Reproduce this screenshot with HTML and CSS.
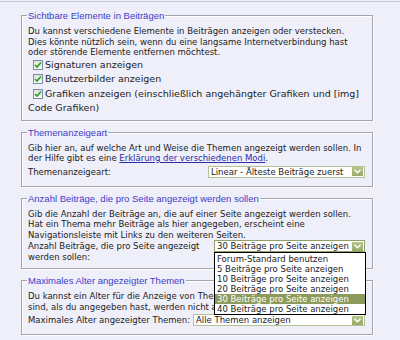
FILE: index.html
```html
<!doctype html>
<html>
<head>
<meta charset="utf-8">
<title>Anzeige-Einstellungen</title>
<link rel="stylesheet" href="styles.css">
</head>
<body>
<div class="page">
<!--Sichtbare Elemente-->
<fieldset class="group">
<legend>Sichtbare Elemente in Beiträgen</legend>
<p>Du kannst verschiedene Elemente in Beiträgen anzeigen oder verstecken. Dies könnte nützlich sein, wenn du eine langsame Internetverbindung hast oder störende Elemente entfernen möchtest.</p>
<ul class="checks">
<li><span class="box"><svg width="8" height="8" viewBox="0 0 8 8"><path d="M1 4 L3 6 L7 1.5" fill="none" stroke="#23a023" stroke-width="1.6"/></svg></span>Signaturen anzeigen</li>
<li><span class="box"><svg width="8" height="8" viewBox="0 0 8 8"><path d="M1 4 L3 6 L7 1.5" fill="none" stroke="#23a023" stroke-width="1.6"/></svg></span>Benutzerbilder anzeigen</li>
<li><span class="box"><svg width="8" height="8" viewBox="0 0 8 8"><path d="M1 4 L3 6 L7 1.5" fill="none" stroke="#23a023" stroke-width="1.6"/></svg></span>Grafiken anzeigen (einschließlich angehängter Grafiken und [img] Code Grafiken)</li>
</ul>
</fieldset>
<!--Themenanzeigeart-->
<fieldset class="group">
<legend>Themenanzeigeart</legend>
<p>Gib hier an, auf welche Art und Weise die Themen angezeigt werden sollen. In der Hilfe gibt es eine <a href="javascript:;">Erklärung der verschiedenen Modi</a>.</p>
<div class="row">
<span class="label">Themenanzeigeart:</span>
<div class="select sel-mode"><span class="value">Linear - Älteste Beiträge zuerst</span><span class="arrow"><svg width="7" height="5" viewBox="0 0 7 5"><path d="M0.5 0.8 L3.5 3.8 L6.5 0.8" fill="none" stroke="#fff" stroke-width="1.4"/></svg></span></div>
</div>
</fieldset>
<!--Beiträge pro Seite-->
<fieldset class="group">
<legend>Anzahl Beiträge, die pro Seite angezeigt werden sollen</legend>
<p>Gib die Anzahl der Beiträge an, die auf einer Seite angezeigt werden sollen. Hat ein Thema mehr Beiträge als hier angegeben, erscheint eine Navigationsleiste mit Links zu den weiteren Seiten.</p>
<div class="row wrap">
<span class="label">Anzahl Beiträge, die pro Seite angezeigt werden sollen:</span>
<div class="select sel-count"><span class="value">30 Beiträge pro Seite anzeigen</span><span class="arrow"><svg width="7" height="5" viewBox="0 0 7 5"><path d="M0.5 0.8 L3.5 3.8 L6.5 0.8" fill="none" stroke="#fff" stroke-width="1.4"/></svg></span>
<!--aufgeklappte Liste-->
<ul class="options">
<li>Forum-Standard benutzen</li>
<li>5 Beiträge pro Seite anzeigen</li>
<li>10 Beiträge pro Seite anzeigen</li>
<li>20 Beiträge pro Seite anzeigen</li>
<li class="active">30 Beiträge pro Seite anzeigen</li>
<li>40 Beiträge pro Seite anzeigen</li>
</ul>
</div>
</div>
</fieldset>
<!--Maximales Alter-->
<fieldset class="group">
<legend>Maximales Alter angezeigter Themen</legend>
<p>Du kannst ein Alter für die Anzeige von Themen festlegen. Themen, die älter sind, als du angegeben hast, werden nicht angezeigt.</p>
<div class="row">
<span class="label">Maximales Alter angezeigter Themen:</span>
<div class="select sel-age"><span class="value">Alle Themen anzeigen</span><span class="arrow"><svg width="7" height="5" viewBox="0 0 7 5"><path d="M0.5 0.8 L3.5 3.8 L6.5 0.8" fill="none" stroke="#fff" stroke-width="1.4"/></svg></span></div>
</div>
</fieldset>
</div>
</body>
</html>
```
FILE: styles.css
```css
*{
	margin:0;
	padding:0;
}
body
{
	background-color:#efeff9;
	font-family:"DejaVu Sans",Verdana,sans-serif;
	color:#222;
}
/*Seite mit grauer Linie oben*/
.page
{
	margin-top:1px;
	border-top:1px solid #c6c6d2;
	padding:8px 27px 0 21px;
}
/*Rahmen der Gruppen*/
.group
{
	border:1px solid #a3a3ad;
	box-shadow:1px 1px 0 #fff,inset 1px 1px 0 #fff;
	padding:0 7px 4px 6px;
	margin-bottom:6px;
}
.group legend
{
	font:9.5px/11px "Liberation Sans",Arial,sans-serif;
	color:#3d3dc8;
	background-color:#efeff9;
	padding:0 1px;
	margin-left:-1px;
}
.group p
{
	font-size:8.5px;
	line-height:10.5px;
	margin-top:5px;
}
.group a
{
	color:#2b2ba6;
}
/*Checkboxen*/
.checks
{
	list-style:none;
	font-size:9.5px;
	line-height:14.5px;
}
.box
{
	display:inline-flex;
	align-items:center;
	justify-content:center;
	width:8px;
	height:8px;
	border:1px solid #7a8ea8;
	background:linear-gradient(#e2e2da,#fbfbf8);
	margin:0 2px 0 5px;
	vertical-align:-1px;
}
/*Zeile mit Auswahlfeld*/
.row
{
	display:flex;
	align-items:flex-start;
	gap:2px;
	margin:2px 0 4px;
	font-size:8.5px;
	line-height:10.5px;
}
.row.wrap
{
	margin:0 0 2px;
}
.label
{
	flex:1;
	padding-top:1px;
}
.select
{
	position:relative;
	display:flex;
	align-items:center;
	box-sizing:border-box;
	height:12px;
	border:1px solid #b4c296;
	background-color:#fff;
	padding:0 1px 0 2px;
	line-height:10px;
}
.sel-mode{width:157px;}
.sel-count{width:151px;border-color:#8f9f66;}
.sel-age{width:172px;}
.select .value
{
	flex:1;
	white-space:nowrap;
}
.select .arrow
{
	display:flex;
	align-items:center;
	justify-content:center;
	width:11px;
	height:9px;
	background:linear-gradient(#b6c68c,#98aa68);
}
/*aufgeklappte Liste*/
.options
{
	position:absolute;
	top:11px;
	left:-1px;
	width:152px;
	box-sizing:border-box;
	padding-top:1px;
	list-style:none;
	background-color:#fff;
	border:1px solid #000;
	z-index:2;
}
.options li
{
	height:10px;
	line-height:10px;
	padding-left:2px;
	white-space:nowrap;
}
.options li.active
{
	background-color:#8c9a5c;
	color:#fff;
}
```
